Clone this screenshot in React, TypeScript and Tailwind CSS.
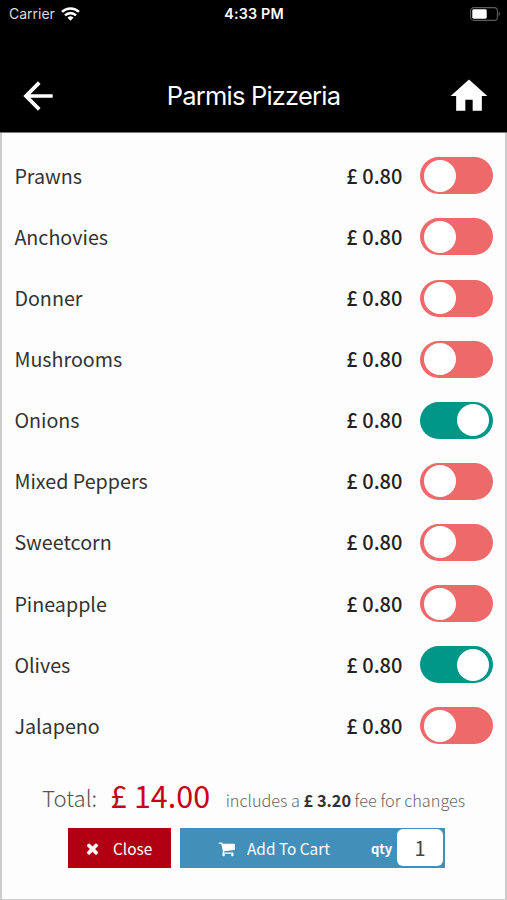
import { useState } from "react"
import { MdArrowBack, MdHome } from "react-icons/md"

const toppings = [
  { name: "Prawns", price: "0.80", on: false },
  { name: "Anchovies", price: "0.80", on: false },
  { name: "Donner", price: "0.80", on: false },
  { name: "Mushrooms", price: "0.80", on: false },
  { name: "Onions", price: "0.80", on: true },
  { name: "Mixed Peppers", price: "0.80", on: false },
  { name: "Sweetcorn", price: "0.80", on: false },
  { name: "Pineapple", price: "0.80", on: false },
  { name: "Olives", price: "0.80", on: true },
  { name: "Jalapeno", price: "0.80", on: false },
]

function WifiIcon() {
  return (
    <svg width="19" height="14" viewBox="0 0 19 14" fill="none" stroke="white" strokeWidth="2.6">
      <path d="M1 4.9a12.2 12.2 0 0 1 17 0" />
      <path d="M4 8.4a7.9 7.9 0 0 1 11 0" />
      <path d="M9.5 13.8l-3-3a4.3 4.3 0 0 1 6 0z" fill="white" stroke="none" />
    </svg>
  )
}

function BatteryIcon() {
  return (
    <svg width="31" height="14" viewBox="0 0 31 14">
      <rect x="0.6" y="0.6" width="26.8" height="12.8" rx="3.2" fill="none" stroke="#5c5c5c" strokeWidth="1.1" />
      <rect x="2.3" y="2.3" width="14.4" height="9.4" rx="1.4" fill="white" />
      <path d="M28.6 4.8c1.8.6 1.8 3.8 0 4.4z" fill="#5c5c5c" />
    </svg>
  )
}

function TimesIcon() {
  return (
    <svg width="17" height="17" viewBox="0 0 1792 1792" fill="white">
      <path d="M1490 1322q0 40-28 68l-136 136q-28 28-68 28t-68-28l-294-294-294 294q-28 28-68 28t-68-28l-136-136q-28-28-28-68t28-68l294-294-294-294q-28-28-28-68t28-68l136-136q28-28 68-28t68 28l294 294 294-294q28-28 68-28t68 28l136 136q28 28 28 68t-28 68l-294 294 294 294q28 28 28 68z" />
    </svg>
  )
}

function CartIcon() {
  return (
    <svg width="17.5" height="17.5" viewBox="0 0 1792 1792" fill="white">
      <path d="M704 1536q0 52-38 90t-90 38-90-38-38-90 38-90 90-38 90 38 38 90zm896 0q0 52-38 90t-90 38-90-38-38-90 38-90 90-38 90 38 38 90zm128-1088v512q0 24-16.5 42.5t-40.5 21.5l-1044 122q13 60 13 70 0 16-24 64h920q26 0 45 19t19 45-19 45-45 19h-1024q-26 0-45-19t-19-45q0-11 8-31.5t16-36 21.5-40 15.5-29.5l-177-823h-204q-26 0-45-19t-19-45 19-45 45-19h256q16 0 28.5 6.5t19.5 15.5 13 24.5 8 26 5.5 29.5 4.5 26h1201q26 0 45 19t19 45z" />
    </svg>
  )
}

function Toggle({ on, onClick }: { on: boolean; onClick: () => void }) {
  return (
    <button
      onClick={onClick}
      className={`flex h-[37px] w-[73.5px] shrink-0 items-center rounded-full px-[4.5px] ${
        on ? "justify-end bg-[#009688]" : "justify-start bg-[#ee6a6a]"
      }`}
    >
      <span className="size-[32px] rounded-full bg-white" />
    </button>
  )
}

export default function App() {
  const [items, setItems] = useState(toppings)

  const toggle = (index: number) => {
    setItems(items.map((item, i) => (i === index ? { ...item, on: !item.on } : item)))
  }

  return (
    <div className="flex h-[900px] w-[507px] flex-col overflow-hidden bg-[#fdfdfd] font-['Noto_Sans_CJK_SC',sans-serif] whitespace-nowrap">
      <header className="h-[133px] shrink-0 border-b border-[#777] bg-black font-['Inter',sans-serif] text-white">
        <div className="grid h-[27px] grid-cols-3 items-center pr-[6px] pl-[9px] text-[14px]">
          <div className="flex items-center gap-[6px] text-[#ddd]">
            <span>Carrier</span>
            <WifiIcon />
          </div>
          <div className="-ml-[2px] text-center text-[14.3px] font-semibold tracking-[0.2px]">4:33 PM</div>
          <div className="flex justify-end">
            <BatteryIcon />
          </div>
        </div>
        <div className="flex h-[106px] items-center justify-between pt-[31px] pr-[16px] pl-[16px]">
          <MdArrowBack size={44} />
          <h1 className="pt-px text-[25.5px] tracking-[-0.8px]">Parmis Pizzeria</h1>
          <MdHome size={44} />
        </div>
      </header>

      <main className="flex grow flex-col border-x-2 border-b border-[#ccc]">
        <ul className="pt-[12.3px]">
          {items.map((item, i) => (
            <li key={item.name} className="flex h-[61.1px] items-center pr-[11.6px] pl-[12.4px] text-[19.7px] leading-[30px]">
              <span className="grow text-[#333]">{item.name}</span>
              <span className="mr-[17.5px] text-[20px] font-medium text-[#222]">£ {item.price}</span>
              <Toggle on={item.on} onClick={() => toggle(i)} />
            </li>
          ))}
        </ul>

        <div className="mt-[16.5px] flex h-[44px] items-start pl-[40px]">
          <span className="text-[22.2px] leading-[49px] font-light text-[#555]">Total:</span>
          <span className="ml-[13px] text-[30.5px] leading-[44px] text-[#c8001a]">£ 14.00</span>
          <span className="ml-[15.5px] text-[16.3px] leading-[54px] font-light text-[#666]">
            includes a <b className="font-bold text-[#333]">£ 3.20</b> fee for changes
          </span>
        </div>

        <div className="mt-[11.7px] flex h-[40px] gap-[9px] pl-[66px] text-[15.4px] text-white">
          <button className="flex w-[103px] items-center bg-[#b00012] pl-[16px]">
            <TimesIcon />
            <span className="ml-[12px]">Close</span>
          </button>
          <div className="flex w-[265.3px] items-center bg-[#428fb9] pl-[38px]">
            <CartIcon />
            <span className="ml-[11.5px] w-[83px]">Add To Cart</span>
            <span className="ml-[41px] w-[21px] text-[13px] font-bold">qty</span>
            <span className="mb-px ml-[5px] flex h-[37px] w-[46px] items-center justify-center rounded-[6px] bg-white pt-px text-[20px] text-[#444]">1</span>
          </div>
        </div>
      </main>
    </div>
  )
}
